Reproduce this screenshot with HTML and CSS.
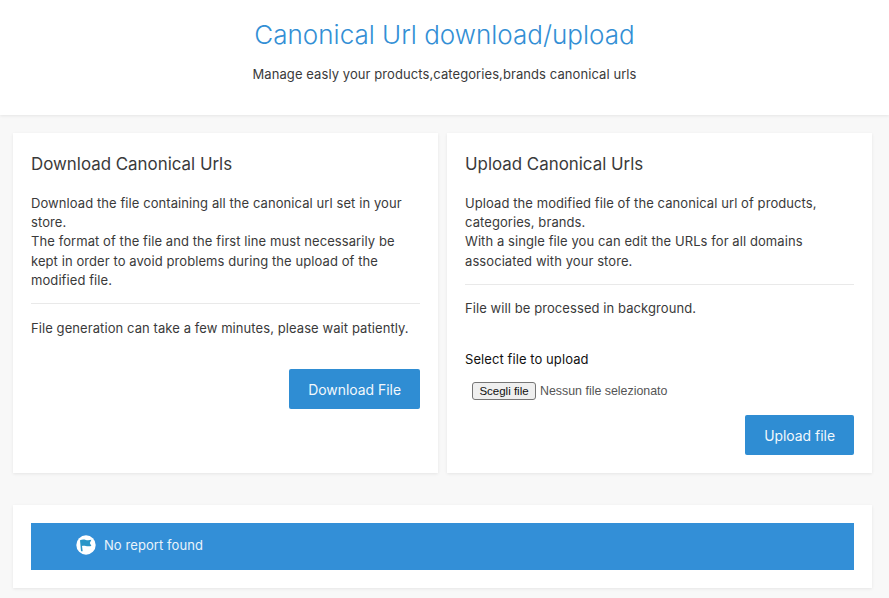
FILE: index.html
```html
<!DOCTYPE html>
<html lang="en">
<head>
<meta charset="utf-8">
<title>Canonical Url download/upload</title>
<link rel="stylesheet" href="styles.css">
</head>
<body>
<header class="hero">
  <h1 class="hero-title">Canonical Url download/upload</h1>
  <p class="hero-sub">Manage easly your products,categories,brands canonical urls</p>
</header>
<main class="content">
  <div class="columns">
    <section class="card">
      <h2 class="card-title">Download Canonical Urls</h2>
      <p class="text">Download the file containing all the canonical url set in your store.<br>The format of the file and the first line must necessarily be kept in order to avoid problems during the upload of the modified file.</p>
      <hr class="rule">
      <p class="text">File generation can take a few minutes, please wait patiently.</p>
      <div class="actions actions-download"><button class="btn" type="button">Download File</button></div>
    </section>
    <section class="card">
      <h2 class="card-title">Upload Canonical Urls</h2>
      <p class="text">Upload the modified file of the canonical url of products, categories, brands.<br>With a single file you can edit the URLs for all domains associated with your store.</p>
      <hr class="rule">
      <p class="text">File will be processed in background.</p>
      <p class="file-label">Select file to upload</p>
      <div class="file-row"><button class="file-btn" type="button">Scegli file</button><span class="file-name">Nessun file selezionato</span></div>
      <div class="actions actions-upload"><button class="btn" type="button">Upload file</button></div>
    </section>
  </div>
  <section class="card report">
    <div class="alert">
      <span class="alert-icon">
        <svg width="20" height="20" viewBox="0 0 20 20"><circle cx="10" cy="10" r="9.7" fill="#fff"/><path d="M4 5.200c2.200-.9 4.200-.7 5.800-.3 1.500.3 3.200.4 5.600-.1l-1.600 3.200 1.600 2.900c-2.400.6-4 .5-5.500.2-1.400-.3-2.700-.4-3.900-.1l.7 5.200H5z" fill="#2a96c8"/></svg>
      </span>
      <span class="alert-text">No report found</span>
    </div>
  </section>
</main>
</body>
</html>
```
FILE: styles.css
```css
* { box-sizing: border-box; }
html, body { margin: 0; padding: 0; }
body {
  background: #f8f8f8;
  font-family: Inter, "Liberation Sans", sans-serif;
  font-size: 13px;
  letter-spacing: .08px;
  color: #3a3a3a;
  height: 598px;
  overflow: hidden;
}
.hero {
  height: 115px;
  background: #fff;
  text-align: center;
  padding-top: 18px;
  box-shadow: 0 1px 3px rgba(0,0,0,.08);
}
.hero-title {
  margin: 0;
  font-size: 26px;
  line-height: 34px;
  font-weight: 300;
  letter-spacing: 0;
  color: #338fd5;
}
.hero-sub {
  margin: 13px 0 0;
  font-size: 13px;
  line-height: 19px;
}
.content { padding: 18px 17px 0 13px; }
.columns {
  display: grid;
  grid-template-columns: 425px 425px;
  gap: 9px;
}
.card {
  background: #fff;
  padding: 18px;
  height: 340px;
  box-shadow: 0 1px 3px rgba(0,0,0,.08);
}
.card-title {
  margin: 2px 0 0;
  font-size: 16.9px;
  line-height: 22px;
  font-weight: 400;
  letter-spacing: 0;
  color: #3a3a3a;
}
.text {
  margin: 0;
  line-height: 19.2px;
}
.card-title + .text { margin-top: 19px; }
.rule {
  border: 0;
  border-top: 1px solid #e9e9e9;
  margin: 13px 0 14.5px;
}
.actions { display: flex; justify-content: flex-end; }
.actions-download { margin-top: 31px; }
.actions-upload { margin-top: 15px; }
.btn {
  height: 40px;
  padding: 2px 19px 0;
  border: 0;
  border-radius: 2px;
  background: #2f8dd3;
  color: #f2f8fc;
  font: 400 13.9px Inter, "Liberation Sans", sans-serif;
}
.file-label {
  margin: 31px 0 0;
  line-height: 19px;
  color: #111;
}
.file-row {
  display: flex;
  align-items: center;
  margin: 13px 0 0 7px;
  height: 18px;
}
.file-btn {
  width: 64px;
  height: 18px;
  padding: 0;
  border: 1px solid #767676;
  border-radius: 3px;
  background: #efefef;
  color: #111;
  font: 11.5px "Liberation Sans", Arial, sans-serif;
}
.file-name {
  margin-left: 4px;
  font: 12.4px "Liberation Sans", Arial, sans-serif;
  letter-spacing: 0;
  color: #555;
}
.report {
  height: 83px;
  margin-top: 32px;
  width: 859px;
}
.alert {
  height: 47px;
  background: #338fd7;
  display: flex;
  align-items: center;
  padding: 0 0 3px 45px;
  color: #fff;
}
.alert-icon { display: flex; width: 20px; height: 20px; }
.alert-text { margin-left: 8px; color: #eaf4fb; }
```
